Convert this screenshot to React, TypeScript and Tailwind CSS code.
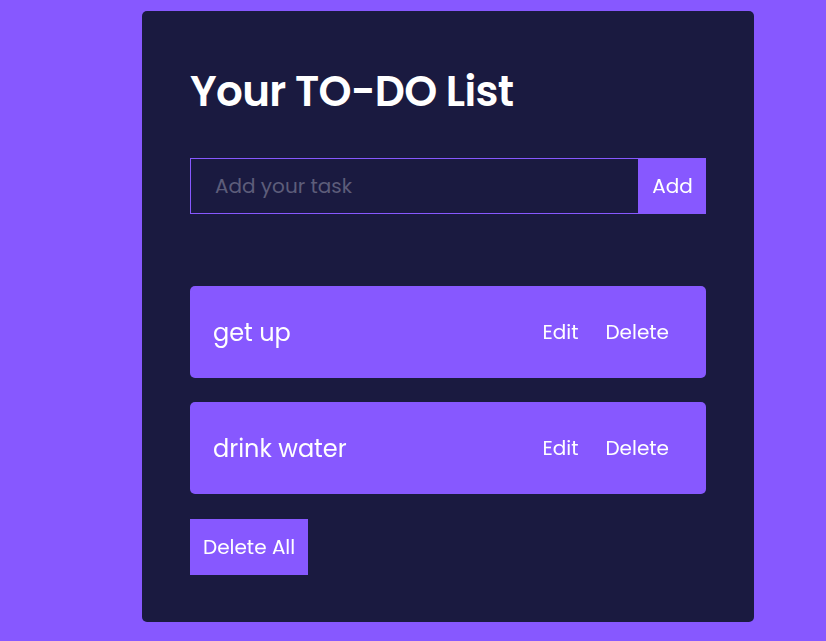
import { useState } from "react";

type Todo = { id: number; task: string };

const initial: Todo[] = [
  { id: 1, task: "get up" },
  { id: 2, task: "drink water" },
];

export default function App() {
  const [todos, setTodos] = useState<Todo[]>(initial);
  const [value, setValue] = useState("");

  const add = () => {
    if (!value.trim()) return;
    setTodos([...todos, { id: Date.now(), task: value }]);
    setValue("");
  };

  return (
    <div className="min-h-screen bg-[#8758ff] pt-[11px] font-['Poppins','Inter',sans-serif]">
      <div className="ml-[142px] w-[612px] h-[611px] rounded-[5px] bg-[#1a1a40] px-12 pt-[54px]">
        <h1 className="text-[42px] leading-[54px] font-semibold text-white tracking-[-0.65px]">Your TO-DO List</h1>

        {/* Form */}
        <form
          className="mt-[39px] flex h-[56px]"
          onSubmit={(e) => {
            e.preventDefault();
            add();
          }}
        >
          <input
            autoFocus
            value={value}
            onChange={(e) => setValue(e.target.value)}
            placeholder="Add your task"
            className="min-w-0 flex-1 border border-[#8758ff] bg-transparent px-6 text-[20px] text-white outline-none placeholder:text-[#5d5d7a] caret-white"
          />
          <button type="submit" className="w-[67px] bg-[#8758ff] text-[20px] text-white">
            Add
          </button>
        </form>

        {/* Items */}
        <div className="mt-[72px] flex flex-col gap-6">
          {todos.map((t) => (
            <div
              key={t.id}
              className="flex h-[92px] items-center justify-between rounded-[5px] bg-[#8758ff] pl-[23px] pr-[37px] text-white"
            >
              <p className="pt-[1px] text-[24px]">{t.task}</p>
              <div className="flex gap-[27px] text-[20px]">
                <button>Edit</button>
                <button onClick={() => setTodos(todos.filter((x) => x.id !== t.id))}>Delete</button>
              </div>
            </div>
          ))}
        </div>

        <button
          onClick={() => setTodos([])}
          className="mt-[25px] h-[56px] px-[13px] bg-[#8758ff] text-[20px] text-white"
        >
          Delete All
        </button>
      </div>
    </div>
  );
}
